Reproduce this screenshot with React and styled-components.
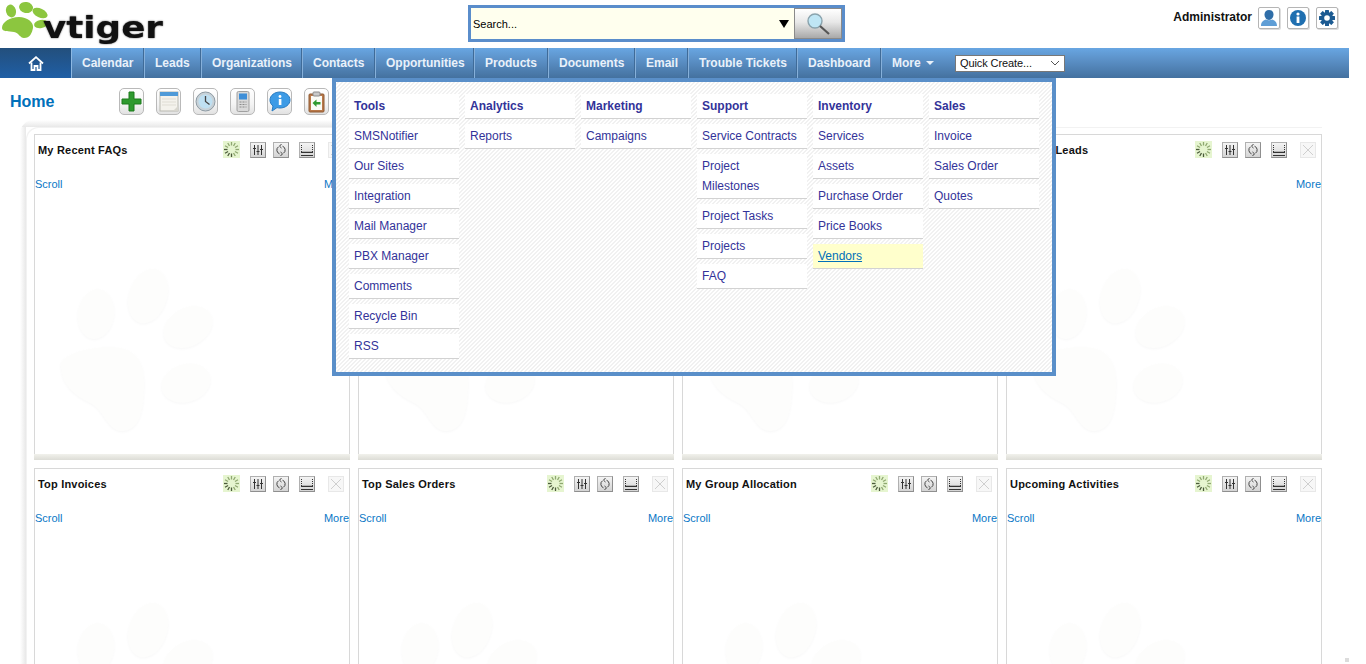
import React from 'react';
import styled, { createGlobalStyle } from 'styled-components';

const GlobalStyle = createGlobalStyle`
  html, body {
    margin: 0;
    height: 100%;
    overflow: hidden;
    background: #fff;
    font-family: 'Liberation Sans', Arial, sans-serif;
  }
  #root { height: 100%; }
`;

const Page = styled.div`
  position: relative;
  width: 1349px;
  height: 664px;
  overflow: hidden;
`;

/* header */
const Header = styled.header`
  display: flex;
  height: 48px;
`;

const Logo = styled.div`
  position: relative;
  width: 468px;
  flex: none;
`;

const LogoText = styled.span`
  position: absolute;
  left: 43px;
  top: 8px;
  font-family: 'DejaVu Sans', sans-serif;
  font-weight: 700;
  font-size: 30px;
  line-height: 40px;
  color: #111;
  transform: scaleX(1.19);
  transform-origin: left center;
  text-shadow: 0 0 1.5px rgba(0, 0, 0, 0.8);
`;

const SearchBox = styled.div`
  display: flex;
  box-sizing: border-box;
  width: 377px;
  height: 37px;
  margin-top: 5px;
  border: 3px solid #5a8dcb;
  background: #5a8dcb;
`;

const SearchField = styled.div`
  flex: 1;
  display: flex;
  align-items: center;
  justify-content: space-between;
  padding: 0 5px 0 2px;
  background: #ffffee;
  font-size: 11px;
  color: #000;
`;

const Triangle = styled.span`
  width: 0;
  height: 0;
  border-left: 5px solid transparent;
  border-right: 5px solid transparent;
  border-top: 8px solid #000;
`;

const SearchButton = styled.div`
  display: flex;
  align-items: center;
  justify-content: center;
  box-sizing: border-box;
  width: 48px;
  border: 1px solid #8a8a8a;
  background: linear-gradient(#fff, #e8e8e8 45%, #a9a9a9);
`;

const UserArea = styled.div`
  display: flex;
  align-items: flex-start;
  margin-left: auto;
  padding: 7px 11px 0 0;
`;

const UserName = styled.span`
  font-size: 12px;
  font-weight: 700;
  line-height: 20px;
  margin-right: 6px;
  color: #111;
`;

const UserButton = styled.div`
  display: flex;
  align-items: center;
  justify-content: center;
  box-sizing: border-box;
  width: 22px;
  height: 22px;
  margin-left: ${p => (p.$first ? 0 : 7)}px;
  border: 1px solid #b5b5b5;
  border-radius: 2px;
  background: #fff;
  box-shadow: 1px 1px 0 #ddd;
`;

/* main nav */
const Nav = styled.nav`
  display: flex;
  align-items: stretch;
  height: 30px;
  background: linear-gradient(#68a6e2, #5d93ca 35%, #44719f);
`;

const HomeTab = styled.div`
  display: flex;
  align-items: center;
  justify-content: center;
  width: 72px;
  background: linear-gradient(#234f7c, #1f5fa6);
  border-right: 1px solid #8db8e2;
  box-sizing: border-box;
`;

const Tab = styled.div`
  display: flex;
  align-items: center;
  gap: 5px;
  box-sizing: border-box;
  width: ${p => p.$w}px;
  padding-left: 10px;
  border-right: ${p => (p.$last ? 'none' : '1px solid #86b0da')};
  box-shadow: ${p => (p.$last ? 'none' : 'inset -1px 0 0 #3f6b98')};
  font-size: 12px;
  font-weight: 700;
  color: #e9f1fa;
  white-space: nowrap;
`;

const MoreArrow = styled.span`
  width: 0;
  height: 0;
  border-left: 4px solid transparent;
  border-right: 4px solid transparent;
  border-top: 4px solid #e9f1fa;
`;

const QuickCreate = styled.div`
  display: flex;
  align-items: center;
  justify-content: space-between;
  box-sizing: border-box;
  width: 110px;
  height: 17px;
  margin: 7px 0 0 0;
  padding: 0 4px 1px 4px;
  background: #fff;
  border: 1px solid #777;
  font-size: 11px;
  letter-spacing: -0.1px;
  color: #111;
`;

/* page title + tools */
const HomeRow = styled.div`
  display: flex;
  align-items: flex-start;
  height: 32px;
  padding: 10px 0 0 10px;
`;

const HomeTitle = styled.h1`
  width: 109px;
  margin: 0;
  font-size: 16px;
  line-height: 27px;
  font-weight: 700;
  color: #0070ba;
`;

const ToolBar = styled.div`
  display: flex;
  gap: 12px;
`;

const ToolButton = styled.div`
  display: flex;
  align-items: center;
  justify-content: center;
  box-sizing: border-box;
  width: 25px;
  height: 27px;
  border: 1px solid #b9b9b9;
  border-radius: 5px;
  background: linear-gradient(#fff, #f4f4f4 60%, #e2e2e2);
`;

/* dashboard */
const Board = styled.div`
  margin-left: 20px;
  padding: 7px 0 0 6px;
  width: 1302px;
  box-sizing: border-box;
  border-top-left-radius: 14px;
  background:
    linear-gradient(#fff, #e8e8e8) 0 0 / 1020px 7px no-repeat,
    linear-gradient(to right, #fff, #e8e8e8) 0 0 / 6px 100% no-repeat;
`;

const Sheet = styled.div`
  display: grid;
  grid-template-columns: repeat(4, 316px);
  gap: 8px;
  padding: 7px 0 0 8px;
  background: #fff;
  border-top-left-radius: 12px;
  box-shadow: inset 1px 1px 0 #f2f2f2;
`;

const Card = styled.section`
  position: relative;
  box-sizing: border-box;
  height: 326px;
  border: 1px solid #d8d8d8;
  border-bottom: none;
  background: #fff;
`;

const CardHeader = styled.div`
  position: relative;
  display: flex;
  align-items: center;
  height: 17px;
  padding: 6px 5px 0 3px;
`;

const CardTitle = styled.h2`
  flex: 1;
  margin: 0;
  font-size: 11px;
  font-weight: 700;
  letter-spacing: 0.2px;
  color: #111;
  white-space: nowrap;
`;

const Spinner = styled.svg`
  width: 17px;
  height: 17px;
  margin-right: 10px;
  background: #e6f5d0;
`;

const CardButton = styled.div`
  display: flex;
  align-items: center;
  justify-content: center;
  box-sizing: border-box;
  width: 16px;
  height: 16px;
  margin-right: ${p => p.$gap || 0}px;
  border: 1px solid ${p => (p.$off ? '#e8e8e8' : '#b0b0b0')};
  border-right-color: ${p => (p.$off ? '#e8e8e8' : '#8f8f8f')};
  border-bottom-color: ${p => (p.$off ? '#e8e8e8' : '#8f8f8f')};
  background: ${p => (p.$off ? '#f7f7f7' : 'linear-gradient(#f4f4f4, #d4d4d4)')};
`;

const CardLinks = styled.div`
  position: relative;
  display: flex;
  justify-content: space-between;
  margin-top: 19px;
  font-size: 11px;
  line-height: 14px;
  color: #0a78c6;
`;

const Watermark = styled.svg`
  position: absolute;
  left: 16px;
  top: 140px;
  width: 175px;
  height: 170px;
  overflow: visible;
  filter: drop-shadow(0 1px 1px rgba(0, 0, 0, 0.03));
`;

const CardFoot = styled.div`
  position: absolute;
  left: -1px;
  right: -1px;
  bottom: 0;
  height: 6px;
  background: linear-gradient(#f1f1ec, #dcdcd6);
`;

/* More dropdown */
const MoreMenu = styled.div`
  position: absolute;
  left: 332px;
  top: 78px;
  z-index: 5;
  display: flex;
  align-items: flex-start;
  gap: 6px;
  box-sizing: border-box;
  width: 724px;
  height: 298px;
  padding: 12px 13px;
  border: 4px solid #5a8fc9;
  background: repeating-linear-gradient(135deg, #fff 0 1.414px, #f1f1f1 1.414px 2.828px);
`;

const MenuColumn = styled.div`
  width: 110px;
`;

const MenuItem = styled.div`
  padding: 2px 8px 2px 5px;
  margin-bottom: 5px;
  font-size: 12px;
  line-height: 20px;
  font-weight: ${p => (p.$head ? 700 : 400)};
  color: ${p => (p.$active ? '#0070ba' : '#333399')};
  text-decoration: ${p => (p.$active ? 'underline' : 'none')};
  background: ${p => (p.$active ? '#ffffcc' : '#fff')};
  border-bottom: 1px solid #d2d2d2;
`;

const ScrollDot = styled.span`
  position: absolute;
  left: 1345px;
  top: 658px;
  width: 4px;
  height: 4px;
  background: #dcdcdc;
`;

const NAV_ITEMS = [
  ['Calendar', 73], ['Leads', 57], ['Organizations', 101], ['Contacts', 73], ['Opportunities', 99],
  ['Products', 74], ['Documents', 87], ['Email', 53], ['Trouble Tickets', 109], ['Dashboard', 84],
];

const MENU = [
  ['Tools', ['SMSNotifier', 'Our Sites', 'Integration', 'Mail Manager', 'PBX Manager', 'Comments', 'Recycle Bin', 'RSS']],
  ['Analytics', ['Reports']],
  ['Marketing', ['Campaigns']],
  ['Support', ['Service Contracts', 'Project Milestones', 'Project Tasks', 'Projects', 'FAQ']],
  ['Inventory', ['Services', 'Assets', 'Purchase Order', 'Price Books', 'Vendors']],
  ['Sales', ['Invoice', 'Sales Order', 'Quotes']],
];

const CARDS = ['My Recent FAQs', 'Top Potentials', 'Key Metrics', 'My New Leads', 'Top Invoices', 'Top Sales Orders', 'My Group Allocation', 'Upcoming Activities'];

function PawLogo() {
  return (
    <svg width="60" height="44" viewBox="0 0 60 44" style={{ position: 'absolute', left: 0, top: 0 }}>
      <g fill="#8cc63f">
        <ellipse cx="11" cy="11" rx="5" ry="6.5" transform="rotate(-15 11 11)" />
        <ellipse cx="26" cy="7.5" rx="7" ry="5.5" transform="rotate(10 26 7.5)" />
        <ellipse cx="40" cy="13" rx="8" ry="4.5" transform="rotate(25 40 13)" />
        <ellipse cx="41" cy="24" rx="7" ry="4" transform="rotate(-10 41 24)" />
        <path d="M2 28c0-6 8-11 17-11 8 0 15 5 14 11-1 5-3 10-9 10-4 0-5-5-10-6-5-1-12 0-12-4z" />
      </g>
    </svg>
  );
}

function SpinnerIcon() {
  const dark = [6, 7, 8, 9];
  return (
    <Spinner viewBox="0 0 17 17">
      {Array.from({ length: 12 }).map((_, i) => (
        <line
          key={i}
          x1="8.5"
          y1="1"
          x2="8.5"
          y2="4.5"
          stroke={dark.includes(i) ? '#4a5a3a' : '#8fa870'}
          strokeWidth="1.3"
          transform={`rotate(${i * 30} 8.5 8.5)`}
        />
      ))}
    </Spinner>
  );
}

function PawMark() {
  return (
    <Watermark viewBox="0 0 175 170">
      <g fill="#fdfdfc">
        <ellipse cx="45" cy="39" rx="18" ry="25" transform="rotate(8 45 39)" />
        <ellipse cx="97" cy="21" rx="19" ry="28" transform="rotate(18 97 21)" />
        <ellipse cx="137" cy="52" rx="26" ry="19" transform="rotate(-30 137 52)" />
        <ellipse cx="135" cy="108" rx="25" ry="19" transform="rotate(-18 135 108)" />
        <path d="M10 90c0-10 25-18 50-18 22 0 33 12 33 35 0 25-3 49-22 49-14 0-18-20-30-27-12-6-31-16-31-39z" />
      </g>
    </Watermark>
  );
}

const Sliders = () => (
  <svg width="10" height="10" viewBox="0 0 10 10" stroke="#333" strokeWidth="1" fill="none">
    <path d="M1.500 0v10M5 0v10M8.500 0v10" />
    <path d="M0 3.500h3M3.500 6.500h3M7 4.500h3" />
  </svg>
);

const Refresh = () => (
  <svg width="10" height="14" viewBox="0 0 10 14" stroke="#444" strokeWidth="1" fill="none">
    <path d="M2.500 3.800A4 4 0 0 0 3.500 10.800M7.500 10.200A4 4 0 0 0 6.500 3.200" />
    <path d="M5.500 1L3.500 3.200l2 1.800M4.500 9L6.500 10.800l-2 2.200" />
  </svg>
);

const Minimize = () => (
  <svg width="14" height="14" viewBox="0 0 14 14" fill="none" stroke="#333">
    <path d="M1.500 2v7h11V2" strokeDasharray="1 1" />
    <path d="M1 9.500h12M1 12.500h12" />
  </svg>
);

const CloseX = () => (
  <svg width="12" height="12" viewBox="0 0 12 12" stroke="#cfcfcf" strokeWidth="1">
    <path d="M1 1l10 10M11 1L1 11" />
  </svg>
);

const TOOLS = [
  <svg key="a" width="21" height="21" viewBox="0 0 21 21"><path d="M8 1h5v7h7v5h-7v7H8v-7H1V8h7z" fill="#2f9a2f" stroke="#1d7a1d" /></svg>,
  <svg key="b" width="20" height="21" viewBox="0 0 20 21">
    <rect x="1" y="1" width="18" height="19" fill="#f4f2ec" stroke="#b8b8b0" />
    <rect x="1" y="1" width="18" height="4" fill="#4f9ad8" />
    <path d="M3 8h14M3 11h14M3 14h14" stroke="#e0ddd4" />
    <path d="M14 20l5-5v5z" fill="#d8d6ce" />
  </svg>,
  <svg key="c" width="21" height="21" viewBox="0 0 21 21">
    <circle cx="10.5" cy="10.5" r="9.5" fill="#c8d2d8" stroke="#8d9aa3" />
    <circle cx="10.5" cy="10.5" r="7" fill="#bfe0f2" />
    <path d="M10.5 5v5.500l4 3" stroke="#444" strokeWidth="1.3" fill="none" />
  </svg>,
  <svg key="d" width="14" height="21" viewBox="0 0 14 21">
    <rect x="1" y="0.5" width="12" height="20" rx="1.5" fill="#d9d9d9" stroke="#a0a0a0" />
    <rect x="3" y="2.5" width="8" height="6" fill="#3f8fd8" />
    <path d="M3.500 11h7M3.500 13.500h7M3.500 16h7" stroke="#8a8a8a" strokeDasharray="2 1" />
  </svg>,
  <svg key="e" width="22" height="21" viewBox="0 0 22 21">
    <path d="M11 1c5.500 0 10 3.500 10 8s-4.500 8-10 8c-1 0-2-.1-3-.4L3 20l1-5C2 13.500 1 11.400 1 9c0-4.500 4.500-8 10-8z" fill="#3d9be6" stroke="#2a7cc2" />
    <rect x="9.800" y="8" width="2.600" height="6" fill="#fff" />
    <circle cx="11" cy="5.500" r="1.400" fill="#fff" />
  </svg>,
  <svg key="f" width="17" height="22" viewBox="0 0 17 22">
    <rect x="1" y="3" width="15" height="18" rx="1" fill="#b9794a" stroke="#8e5a32" />
    <rect x="3" y="5" width="11" height="14" fill="#fbfbf6" />
    <rect x="5" y="1" width="7" height="4" rx="1" fill="#c9c9c9" stroke="#8a8a8a" />
    <path d="M4.500 12l4-3.500V11h4v2.500h-4V16z" fill="#2f9a2f" />
  </svg>,
];

export default function App() {
  return (
    <Page>
      <GlobalStyle />
      <Header>
        <Logo>
          <PawLogo />
          <LogoText>vtiger</LogoText>
        </Logo>
        <SearchBox>
          <SearchField>
            Search...
            <Triangle />
          </SearchField>
          <SearchButton>
            <svg width="34" height="24" viewBox="0 0 34 24" fill="none">
              <circle cx="14" cy="9" r="7" fill="#bfe6f5" stroke="#8aa3ad" strokeWidth="1.4" />
              <path d="M19 14l9 8" stroke="#555" strokeWidth="2.2" />
            </svg>
          </SearchButton>
        </SearchBox>
        <UserArea>
          <UserName>Administrator</UserName>
          <UserButton $first>
            <svg width="18" height="18" viewBox="0 0 18 18" fill="#2f6ea8">
              <path d="M9 1c2.800 0 4.500 2 4.500 4.500S11.800 11 9 11 4.500 8 4.500 5.500 6.200 1 9 1z" />
              <path d="M1 17c0-4 2.500-6 5-6.500 1.500 1 4.500 1 6 0 2.500.5 5 2.500 5 6.500z" fill="#5f9ed6" />
            </svg>
          </UserButton>
          <UserButton>
            <svg width="18" height="18" viewBox="0 0 18 18">
              <circle cx="9" cy="9" r="8" fill="#1f6fb0" />
              <rect x="7.600" y="7.500" width="2.800" height="6.500" fill="#fff" />
              <circle cx="9" cy="5" r="1.600" fill="#fff" />
            </svg>
          </UserButton>
          <UserButton>
            <svg width="18" height="18" viewBox="0 0 18 18">
              <g fill="#1c5b92">
                {[0, 45, 90, 135].map(a => (
                  <rect key={a} x="7" y="1" width="4" height="16" rx="0.5" transform={`rotate(${a} 9 9)`} />
                ))}
                <circle cx="9" cy="9" r="6" />
              </g>
              <circle cx="9" cy="9" r="2.800" fill="#fff" />
            </svg>
          </UserButton>
        </UserArea>
      </Header>

      <Nav>
        <HomeTab>
          <svg width="16" height="15" viewBox="0 0 16 15" fill="none" stroke="#fff" strokeWidth="1.800">
            <path d="M1 7.500L8 1.200l7 6.300" />
            <path d="M3.500 6.500V14h3v-4h3v4h3V6.500" />
          </svg>
        </HomeTab>
        {NAV_ITEMS.map(([item, w]) => (
          <Tab key={item} $w={w}>{item}</Tab>
        ))}
        <Tab $last $w={73}>
          More
          <MoreArrow />
        </Tab>
        <QuickCreate>
          Quick Create...
          <svg width="10" height="6" viewBox="0 0 10 6" fill="none" stroke="#555">
            <path d="M1 1l4 4 4-4" />
          </svg>
        </QuickCreate>
      </Nav>

      <HomeRow>
        <HomeTitle>Home</HomeTitle>
        <ToolBar>
          {TOOLS.map((icon, i) => (
            <ToolButton key={i}>{icon}</ToolButton>
          ))}
        </ToolBar>
      </HomeRow>

      <Board>
        <Sheet>
          {CARDS.map((title, i) => (
            <Card key={title}>
              <PawMark />
              <CardHeader>
                <CardTitle>{title}</CardTitle>
                <SpinnerIcon />
                <CardButton $gap={7}><Sliders /></CardButton>
                <CardButton $gap={10}><Refresh /></CardButton>
                <CardButton $gap={13}><Minimize /></CardButton>
                <CardButton $off><CloseX /></CardButton>
              </CardHeader>
              <CardLinks>
                <span>Scroll</span>
                <span>More</span>
              </CardLinks>
              {i < 4 && <CardFoot />}
            </Card>
          ))}
        </Sheet>
      </Board>

      <MoreMenu>
        {MENU.map(([head, items]) => (
          <MenuColumn key={head}>
            <MenuItem $head>{head}</MenuItem>
            {items.map(item => (
              <MenuItem key={item} $active={item === 'Vendors'}>{item}</MenuItem>
            ))}
          </MenuColumn>
        ))}
      </MoreMenu>
      <ScrollDot />
    </Page>
  );
}
